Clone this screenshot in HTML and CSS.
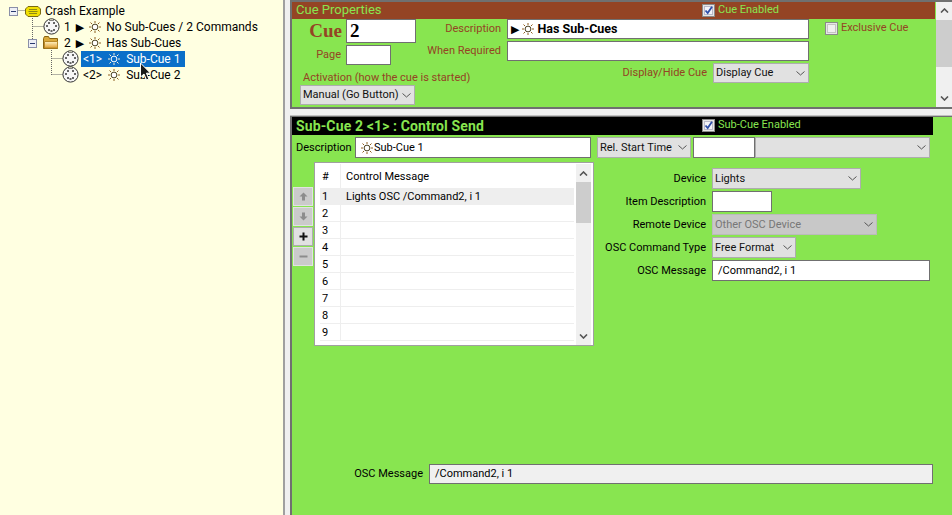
FILE: index.html
```html
<!DOCTYPE html>
<html lang="en">
<head>
<meta charset="utf-8">
<title>Cue Properties</title>
<link rel="stylesheet" href="styles.css">
</head>
<body>
<svg class="defs" width="0" height="0" aria-hidden="true">
  <defs>
    <linearGradient id="foldgrad" x1="0" y1="0" x2="0" y2="1">
      <stop offset="0" stop-color="#fff3c4"/>
      <stop offset="1" stop-color="#e0a030"/>
    </linearGradient>
  </defs>
  <symbol id="sun" viewBox="0 0 12 12">
    <circle cx="6" cy="6" r="2.9" fill="#fff" stroke="#4a3f20" stroke-width="1"/>
    <path d="M6 0v2M6 10v2M0 6h2M10 6h2M1.5 1.5L3 3M9 9l1.5 1.5M1.5 10.5L3 9M9 3l1.5-1.5" stroke="#8f5f20" stroke-width="1" fill="none"/>
  </symbol>
  <symbol id="sunw" viewBox="0 0 12 12">
    <circle cx="6" cy="6" r="2.9" fill="none" stroke="#fff" stroke-width="1"/>
    <path d="M6 0v2M6 10v2M0 6h2M10 6h2M1.5 1.5L3 3M9 9l1.5 1.5M1.5 10.5L3 9M9 3l1.5-1.5" stroke="#fff4d0" stroke-width="1" fill="none"/>
  </symbol>
  <symbol id="dmx" viewBox="0 0 17 17">
    <circle cx="8.5" cy="8.5" r="7.6" fill="#f6f6f6" stroke="#333"/>
    <path d="M6.5 1h4v1.5h-4Z" fill="#ffffe1" stroke="#333" stroke-width=".6"/>
    <g fill="#666"><rect x="3" y="7" width="2" height="2"/><rect x="12" y="7" width="2" height="2"/><rect x="5" y="4" width="2" height="2"/><rect x="10" y="4" width="2" height="2"/><rect x="5" y="11" width="2" height="2"/><rect x="10" y="11" width="2" height="2"/><rect x="7.5" y="12" width="2" height="2"/></g>
  </symbol>
  <symbol id="minus" viewBox="0 0 9 9">
    <rect x=".5" y=".5" width="8" height="8" fill="#eef0f6" stroke="#8a8fa8"/>
    <path d="M2 4.5h5" stroke="#2a3a70"/>
  </symbol>
  <symbol id="chev" viewBox="0 0 9 5">
    <path d="M.5.5l4 3.5 4-3.5" fill="none" stroke="#555" stroke-width="1"/>
  </symbol>
  <symbol id="chevup" viewBox="0 0 9 5">
    <path d="M1 4.5l3.5-3.5 3.5 3.5" fill="none" stroke="#555" stroke-width="1.6"/>
  </symbol>
  <symbol id="chevdn" viewBox="0 0 9 5">
    <path d="M1 .5l3.5 3.5 3.5-3.5" fill="none" stroke="#555" stroke-width="1.6"/>
  </symbol>
  <symbol id="check" viewBox="0 0 13 13">
    <rect x=".5" y=".5" width="12" height="12" fill="#e6e6e6" stroke="#8a8a8a"/>
    <rect x="2.5" y="2.5" width="8" height="8" fill="#f3f3f8" stroke="#b8b8c8"/>
    <path d="M3.5 6.5l2.2 2.6L10 2.8" fill="none" stroke="#2f4fa8" stroke-width="1.8"/>
  </symbol>
  <symbol id="uncheck" viewBox="0 0 13 13">
    <rect x=".5" y=".5" width="12" height="12" fill="#e6e6e6" stroke="#8a8a8a"/>
    <rect x="2.5" y="2.5" width="8" height="8" fill="#f0f0f0" stroke="#c4c4c4"/>
  </symbol>
</svg>

<div class="app">
  <aside class="tree">
    <svg class="tree-lines" width="90" height="90" aria-hidden="true">
      <path d="M17.5 10.5h7M32.5 18v21M32.5 26.5h11M51.5 50v25M51.5 58.5h11M51.5 74.5h11" stroke="#666" stroke-dasharray="1 1" fill="none"/>
    </svg>
    <div class="node node-root">
      <svg class="exp" width="9" height="9"><use href="#minus"/></svg>
      <svg class="ico-root" width="16" height="11" viewBox="0 0 16 11">
        <path d="M3 .5h10l2.5 2.5v5L13 10.5H3L.5 8V3Z" fill="#f2e000" stroke="#7a6a10"/>
        <path d="M4 3.5h8M3.5 5.5h9M4 7.5h8" stroke="#8f8a10"/>
      </svg>
      <span class="label">Crash Example</span>
    </div>
    <div class="node node-l1">
      <svg class="ico" width="17" height="17"><use href="#dmx"/></svg>
      <span class="label">1 <span class="tri">▶</span> <svg class="sun" width="12" height="12"><use href="#sun"/></svg> No Sub-Cues / 2 Commands</span>
    </div>
    <div class="node node-l1b">
      <svg class="exp" width="9" height="9"><use href="#minus"/></svg>
      <svg class="ico-folder" width="16" height="13" viewBox="0 0 16 13">
        <path d="M.5 2.5l1-2h4l1 2h8v10H.5Z" fill="#d9a93a" stroke="#8a6410"/>
        <path d="M1.5 5.5h13v6.5h-13Z" fill="url(#foldgrad)" stroke="#b98a28"/>
      </svg>
      <span class="label">2 <span class="tri">▶</span> <svg class="sun" width="12" height="12"><use href="#sun"/></svg> Has Sub-Cues</span>
    </div>
    <div class="node node-l2">
      <svg class="ico" width="17" height="17"><use href="#dmx"/></svg>
      <span class="label selected">&lt;1&gt; <svg class="sun" width="12" height="12"><use href="#sunw"/></svg> Sub-Cue 1</span>
    </div>
    <div class="node node-l2">
      <svg class="ico" width="17" height="17"><use href="#dmx"/></svg>
      <span class="label">&lt;2&gt; <svg class="sun" width="12" height="12"><use href="#sun"/></svg> Sub-Cue 2</span>
    </div>
    <svg class="cursor" width="15" height="19" viewBox="0 0 12 19" aria-hidden="true">
      <path d="M1 1v14l3.5-3 2.5 6 2.4-1-2.5-5.8H11Z" fill="#1a1a1a" stroke="#fff" stroke-width="1"/>
    </svg>
  </aside>

  <main class="detail">
    <section class="cue">
      <div class="cue-body">
        <header class="band band-brown">
          <span class="band-title">Cue Properties</span>
          <span class="band-check"><svg width="13" height="13"><use href="#check"/></svg>Cue Enabled</span>
        </header>
        <div class="cue-form">
          <div class="cue-left">
            <div class="cue-num">
              <span class="cue-word">Cue</span>
              <div class="field field-cue">2</div>
            </div>
            <div class="cue-page">
              <span class="brown">Page</span>
              <div class="field field-page"></div>
            </div>
            <div class="brown activation">Activation (how the cue is started)</div>
            <div class="select sel-activation"><span>Manual (Go Button)</span><svg width="9" height="5"><use href="#chev"/></svg></div>
          </div>
          <div class="cue-mid">
            <div class="mid-row">
              <span class="brown">Description</span>
              <div class="field field-desc"><span class="tri tri-desc">▶</span> <svg class="sun" width="12" height="12"><use href="#sun"/></svg> <b class="desc-bold">Has Sub-Cues</b></div>
            </div>
            <div class="mid-row">
              <span class="brown">When Required</span>
              <div class="field field-desc"></div>
            </div>
            <div class="mid-row">
              <span class="brown">Display/Hide Cue</span>
              <div class="select sel-display"><span>Display Cue</span><svg width="9" height="5"><use href="#chev"/></svg></div>
            </div>
          </div>
          <div class="cue-right">
            <svg width="13" height="13"><use href="#uncheck"/></svg>
            <span class="brown">Exclusive Cue</span>
          </div>
        </div>
      </div>
      <div class="scroll scroll-cue">
        <svg width="9" height="5"><use href="#chevup"/></svg>
        <div class="thumb thumb-cue"></div>
        <svg class="scroll-end" width="9" height="5"><use href="#chevdn"/></svg>
      </div>
    </section>

    <div class="split"></div>

    <section class="sub">
      <header class="band band-black">
        <span class="band-title">Sub-Cue 2 &lt;1&gt; : Control Send</span>
        <span class="band-check"><svg width="13" height="13"><use href="#check"/></svg>Sub-Cue Enabled</span>
      </header>

      <div class="sub-row">
        <span class="sub-desc-label">Description</span>
        <div class="field field-subdesc"><svg class="sun" width="12" height="12"><use href="#sun"/></svg> Sub-Cue 1</div>
        <div class="select sel-rel"><span>Rel. Start Time</span><svg width="9" height="5"><use href="#chev"/></svg></div>
        <div class="field field-time"></div>
        <div class="select sel-blank"><span></span><svg width="9" height="5"><use href="#chev"/></svg></div>
      </div>

      <div class="sub-main">
        <div class="side-btns">
          <div class="sbtn"><svg width="11" height="11" viewBox="0 0 11 11"><path d="M5.5 1.5L9.5 5.5H7V9.5H4V5.5H1.5Z" fill="#8c8c8c"/></svg></div>
          <div class="sbtn"><svg width="11" height="11" viewBox="0 0 11 11"><path d="M5.5 9.5L9.5 5.5H7V1.5H4V5.5H1.5Z" fill="#8c8c8c"/></svg></div>
          <div class="sbtn sbtn-on"><svg width="11" height="11" viewBox="0 0 11 11"><path d="M4.5 1.5h2v3h3v2h-3v3h-2v-3h-3v-2h3Z" fill="#111"/></svg></div>
          <div class="sbtn"><svg width="11" height="11" viewBox="0 0 11 11"><path d="M1.5 4.5h8v2h-8Z" fill="#8c8c8c"/></svg></div>
        </div>

        <div class="grid-box">
          <div class="grid-table">
            <div class="gr gr-head"><div class="c-num">#</div><div class="c-msg">Control Message</div></div>
            <div class="gr gr-sel"><div class="c-num">1</div><div class="c-msg">Lights OSC /Command2, i 1</div></div>
            <div class="gr"><div class="c-num">2</div><div class="c-msg"></div></div>
            <div class="gr"><div class="c-num">3</div><div class="c-msg"></div></div>
            <div class="gr"><div class="c-num">4</div><div class="c-msg"></div></div>
            <div class="gr"><div class="c-num">5</div><div class="c-msg"></div></div>
            <div class="gr"><div class="c-num">6</div><div class="c-msg"></div></div>
            <div class="gr"><div class="c-num">7</div><div class="c-msg"></div></div>
            <div class="gr"><div class="c-num">8</div><div class="c-msg"></div></div>
            <div class="gr"><div class="c-num">9</div><div class="c-msg"></div></div>
          </div>
          <div class="scroll scroll-grid">
            <svg width="9" height="5"><use href="#chevup"/></svg>
            <div class="thumb thumb-grid"></div>
            <svg class="scroll-end" width="9" height="5"><use href="#chevdn"/></svg>
          </div>
        </div>

        <div class="props">
          <span class="p-label">Device</span>
          <div class="select sel-device"><span>Lights</span><svg width="9" height="5"><use href="#chev"/></svg></div>
          <span class="p-label">Item Description</span>
          <div class="field field-item"></div>
          <span class="p-label">Remote Device</span>
          <div class="select sel-remote"><span>Other OSC Device</span><svg width="9" height="5"><use href="#chev"/></svg></div>
          <span class="p-label">OSC Command Type</span>
          <div class="select sel-type"><span>Free Format</span><svg width="9" height="5"><use href="#chev"/></svg></div>
          <span class="p-label">OSC Message</span>
          <div class="field field-msg">/Command2, i 1</div>
        </div>
      </div>

      <div class="sub-foot">
        <span>OSC Message</span>
        <div class="field field-foot">/Command2, i 1</div>
      </div>
    </section>
  </main>
</div>
</body>
</html>
```

FILE: styles.css
```css
* { box-sizing: border-box; }
html, body { margin: 0; height: 100%; overflow: hidden; }
body { font: 11px/16px Roboto, sans-serif; color: #000; background: #f0f0f0; }
.defs { position: absolute; }
svg { flex: none; }

.app { display: flex; width: 952px; height: 515px; }

/* tree */
.tree { position: relative; width: 285px; height: 515px; flex: none; padding-top: 3px; background: #ffffe1; border-right: 2px solid #a0a0a0; font-size: 12px; }
.tree-lines { position: absolute; left: 0; top: 0; }
.node { position: relative; display: flex; align-items: center; height: 16px; white-space: nowrap; }
.node-root { padding-left: 9px; }
.ico-root { margin-left: 7px; margin-right: 2px; }
.node-l1 { padding-left: 43px; }
.node-l1 .ico { margin-right: 2px; margin-top: -2px; }
.node-l1b { padding-left: 28px; }
.node-l1b .ico-folder { margin-left: 6px; margin-right: 3px; margin-top: -2px; }
.node-l2 { padding-left: 62px; }
.node-l2 .ico { margin-right: 2px; margin-top: -2px; }
.label { display: inline-flex; align-items: center; gap: 5px; padding: 0 2px; height: 16px; }
.node-l2 .label { gap: 6px; }
.selected { background: #0a6fc9; color: #fff; padding-right: 5px; }
.tri { font: 11px/1 "DejaVu Sans", sans-serif; color: #000; }
.sun { display: inline-block; }
.cursor { position: absolute; left: 138px; top: 62px; }

/* right side */
.detail { flex: 1; padding-left: 5px; display: flex; flex-direction: column; min-width: 0; }
.cue { display: flex; height: 109px; background: #88e550; border: solid #707070; border-width: 2px 0 2px 2px; }
.cue-body { width: 643px; flex: none; }
.band { position: relative; display: flex; align-items: center; height: 17px; padding-left: 4px; }
.band-brown { background: #944424; color: #88e550; }
.band-brown .band-title { font-size: 13px; margin-top: -2px; }
.band-black { background: #000; color: #88e550; height: 18px; width: 641px; }
.band-black .band-title { font-size: 14px; font-weight: bold; letter-spacing: .13px; }
.band-check { position: absolute; left: 410px; top: 0; display: flex; align-items: center; gap: 3px; font-weight: normal; }
.brown { color: #944424; white-space: nowrap; }

.cue-form { display: flex; }
.cue-left { width: 124px; padding-left: 8px; flex: none; display: flex; flex-direction: column; }
.cue-num { display: flex; align-items: center; justify-content: flex-end; gap: 4px; }
.cue-word { font: bold 19px/24px "Liberation Serif", serif; color: #944424; }
.field { background: #fff; border: 1px solid #707070; height: 20px; display: flex; align-items: center; gap: 3px; padding: 0 3px; white-space: nowrap; }
.field-cue { width: 70px; height: 24px; font: bold 19px/22px "Liberation Serif", serif; color: #000; }
.cue-page { display: flex; align-items: center; justify-content: flex-end; gap: 5px; margin-top: 2px; padding-right: 25px; }
.field-page { width: 45px; }
.activation { margin-top: 1px; margin-left: 3px; margin-right: -60px; padding-top: 4px; height: 19px; }
.sel-activation { width: 115px; }
.cue-mid { width: 393px; flex: none; display: flex; flex-direction: column; gap: 2px; }
.mid-row { display: flex; align-items: center; justify-content: flex-end; gap: 6px; }
.field-desc { width: 302px; }
.desc-bold { font-size: 12.5px; }
.sel-display { width: 96px; }
.cue-right { display: flex; gap: 3px; align-items: center; height: 16px; margin: 1px 0 0 16px; }

.select { display: flex; align-items: center; justify-content: space-between; height: 20px; padding: 0 3px 0 2px; background: #e1e1e1; border: 1px solid #adadad; white-space: nowrap; color: #111; }
.scroll { display: flex; flex-direction: column; align-items: center; background: #f0f0f0; padding-top: 6px; }
.scroll-cue { width: 17px; margin-left: 1px; }
.thumb { width: 100%; background: #cdcdcd; margin-top: 7px; }
.thumb-cue { height: 47px; }
.scroll-end { margin-top: auto; margin-bottom: 6px; }

.split { height: 8px; flex: none; background: #f0f0f0; border-bottom: 1px solid #707070; box-shadow: inset 0 -4px 0 -3px #c0c0c0; }

.sub { flex: 1; display: flex; flex-direction: column; background: #88e550; border-left: 2px solid #707070; min-height: 0; }
.sub-row { display: flex; align-items: center; height: 21px; margin-top: 2px; padding-left: 4px; }
.sub-desc-label { width: 59px; flex: none; }
.field-subdesc { width: 236px; height: 21px; padding-left: 5px; gap: 1px; }
.sel-rel { width: 94px; height: 21px; margin-left: 6px; }
.field-time { width: 62px; height: 21px; margin-left: 2px; }
.sel-blank { width: 175px; height: 21px; }

.sub-main { display: flex; margin-top: 4px; height: 184px; align-items: flex-start; }
.side-btns { width: 20px; margin: 25px 0 0 1px; display: flex; flex-direction: column; gap: 1px; flex: none; }
.sbtn { height: 19px; display: flex; align-items: center; justify-content: center; background: #cbcbcb; border: 1px solid #e2e2e2; }
.sbtn-on { background: #e1e1e1; border-color: #adadad; }

.grid-box { display: flex; width: 280px; height: 184px; flex: none; padding: 1px 2px 0 5px; margin-left: 1px; background: #fff; border: 1px solid #a0a0a0; }
.grid-table { flex: 1; min-width: 0; height: 181px; overflow: hidden; }
.gr { display: flex; height: 17px; border-bottom: 1px solid #eee; }
.gr-head { height: 24px; border-bottom: 0; align-items: center; }
.gr-head .c-num, .gr-head .c-msg { height: 24px; line-height: 26px; padding-top: 0; }
.gr-sel { background: #eee; }
.c-num { width: 21px; padding: 1px 0 0 2px; border-right: 1px solid #eee; flex: none; }
.c-msg { flex: 1; padding: 1px 0 0 5px; white-space: nowrap; }
.scroll-grid { width: 15px; margin-left: 2px; height: 181px; padding-top: 7px; }
.thumb-grid { height: 41px; margin-top: 6px; }

.props { display: grid; grid-template-columns: 112px auto; grid-auto-rows: 21px; column-gap: 6px; row-gap: 2px; margin-top: 6px; justify-items: start; align-items: center; }
.p-label { justify-self: end; white-space: nowrap; }
.props .select, .props .field { height: 21px; }
.sel-device { width: 149px; }
.field-item { width: 60px; }
.sel-remote { width: 165px; background: #c8c8c8; border-color: #bbb; color: #777; }
.sel-type { width: 84px; }
.field-msg { width: 218px; padding-left: 5px; }

.sub-foot { display: flex; align-items: center; justify-content: flex-end; gap: 6px; margin-top: auto; margin-bottom: 31px; padding-right: 19px; }
.field-foot { width: 504px; background: #f0f0f0; padding-left: 5px; }
```
